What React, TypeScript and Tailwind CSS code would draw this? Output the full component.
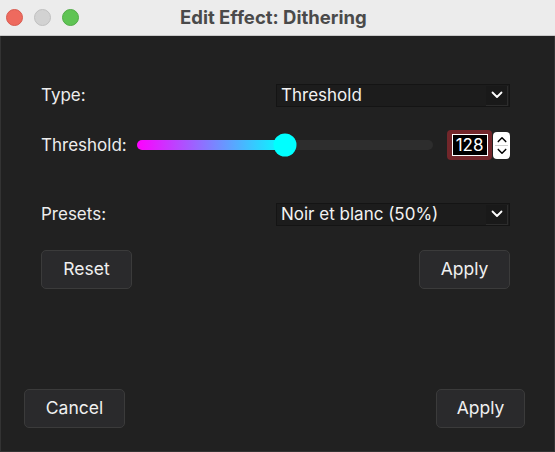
import React from 'react';

function Chevron({ up = false, className = '' }: { up?: boolean; className?: string }) {
  return (
    <svg viewBox="0 0 12 8" className={className} fill="none" stroke="currentColor" strokeWidth="1.8" strokeLinecap="round" strokeLinejoin="round">
      {up ? <path d="M1.5 6.5 6 2l4.5 4.5" /> : <path d="M1.5 1.5 6 6l4.5-4.5" />}
    </svg>
  );
}

function Select({ value }: { value: string }) {
  return (
    <div className="w-[234px] h-[23px] bg-[#1c1c1c] border border-[#141414] flex items-center justify-between pl-[4px] pr-[1px]">
      <span className="text-[17px] text-[#f2f2f2] leading-none">{value}</span>
      <span className="w-[22px] h-[20px] bg-[#191919] border-r border-b border-[#2c2c2c] flex items-center justify-center text-white">
        <Chevron className="w-[12px] h-[8px]" />
      </span>
    </div>
  );
}

function Button({ label, w }: { label: string; w: string }) {
  return (
    <button className={`${w} h-[39px] rounded-[5px] bg-[#2a2a2c] border border-[#3b3b3b] text-[17.5px] text-[#f0f0f0]`}>
      {label}
    </button>
  );
}

export default function App() {
  const pct = 149 / 297;
  return (
    <div className="w-[555px] h-[452px] bg-[#212121] flex flex-col overflow-hidden" style={{ fontFamily: 'Inter, "Noto Sans", sans-serif' }}>
      {/* title bar */}
      <div className="h-[36px] shrink-0 bg-[#ececec] border-b border-[#c9c9c9] flex items-center pl-[6px]">
        <div className="flex gap-[11px]">
          <span className="w-[17px] h-[17px] rounded-full bg-[#ee6a5e] border border-[#d85b50]" />
          <span className="w-[17px] h-[17px] rounded-full bg-[#d2d2d2] border border-[#c0c0c0]" />
          <span className="w-[17px] h-[17px] rounded-full bg-[#5fc454] border border-[#52ac48]" />
        </div>
        <span className="ml-[101px] text-[18.5px] font-bold text-[#4a4a4a]">Edit Effect: Dithering</span>
      </div>

      {/* body */}
      <div className="flex-1 flex flex-col justify-between border-x border-b border-[#333] pb-[23px]">
        <div className="flex flex-col pt-[48px] pl-[40px] pr-[44px]">
          <div className="h-[23px] flex items-center justify-between">
            <span className="text-[17px] leading-none text-[#ededed]">Type:</span>
            <Select value="Threshold" />
          </div>

          <div className="flex items-center mt-[23px] h-[30px]">
            <span className="text-[17px] leading-none text-[#ededed] w-[96px]">Threshold:</span>
            <div className="relative w-[297px] h-[10px] rounded-full bg-[#2d2d2d]">
              <div
                className="h-full rounded-l-full bg-[linear-gradient(to_right,#ff00ff,#00ffff)]"
                style={{ width: `${pct * 100}%` }}
              />
              <span
                className="absolute top-1/2 w-[23px] h-[23px] -translate-x-1/2 -translate-y-1/2 rounded-full bg-[#00ffff]"
                style={{ left: `${pct * 100}%` }}
              />
            </div>
            <div className="ml-[14px] w-[45px] h-[30px] rounded-[4px] bg-[#72262a] flex items-center justify-center">
              <div className="w-[36px] h-[22px] bg-black border border-white flex items-center justify-center">
                <span className="text-[17px] text-white leading-none">128</span>
              </div>
            </div>
            <div className="ml-[1px] w-[17px] h-[27px] rounded-[4px] bg-white flex flex-col items-center justify-center text-black">
              <Chevron up className="w-[10px] h-[7px]" />
              <span className="w-[13px] h-px bg-[#cfcfcf] my-[2px]" />
              <Chevron className="w-[10px] h-[7px]" />
            </div>
          </div>

          <div className="h-[23px] flex items-center justify-between mt-[43px]">
            <span className="text-[17px] leading-none text-[#ededed]">Presets:</span>
            <Select value="Noir et blanc (50%)" />
          </div>

          <div className="flex items-center justify-between mt-[24px]">
            <Button label="Reset" w="w-[91px]" />
            <Button label="Apply" w="w-[91px]" />
          </div>
        </div>

        <div className="flex items-center justify-between pl-[23px] pr-[29px]">
          <Button label="Cancel" w="w-[101px]" />
          <Button label="Apply" w="w-[89px]" />
        </div>
      </div>
    </div>
  );
}
